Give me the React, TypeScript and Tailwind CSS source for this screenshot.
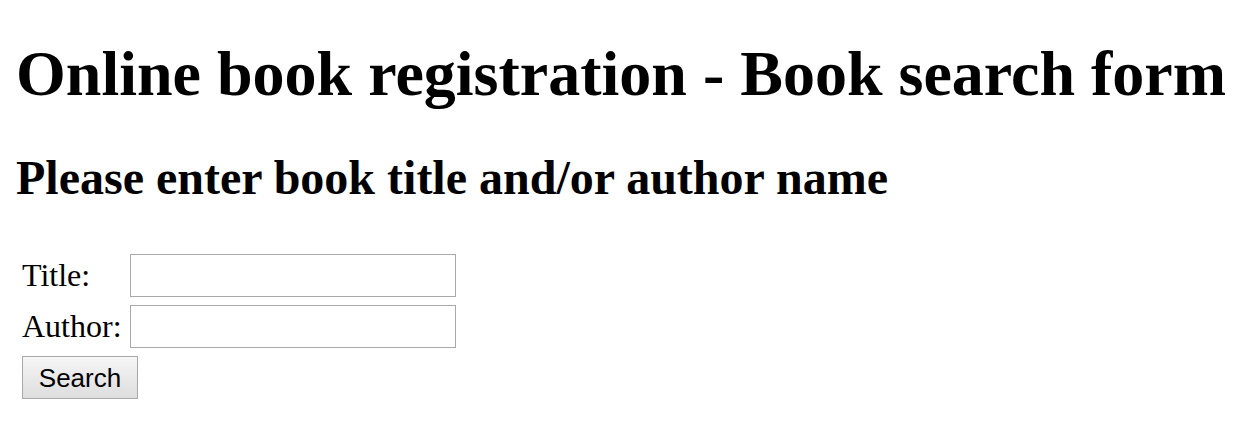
export default function App() {
  return (
    <div className="bg-white text-black min-h-[429px] pl-[16px] pt-[38px]" style={{ fontFamily: '"Liberation Serif", serif' }}>
      <h1 className="text-[64px] font-bold leading-[72px]">Online book registration - Book search form</h1>
      <h2 className="mt-[42px] text-[48px] font-bold leading-[52px]">Please enter book title and/or author name</h2>
      <div className="mt-[50px] ml-[6px] flex flex-col gap-[8px]">
        <div className="flex items-center">
          <span className="w-[108px] text-[32px] leading-[43px]">Title:</span>
          <input className="w-[326px] h-[43px] border border-[#a9a9a9] bg-white" />
        </div>
        <div className="flex items-center">
          <span className="w-[108px] text-[32px] leading-[43px]">Author:</span>
          <input className="w-[326px] h-[43px] border border-[#a9a9a9] bg-white" />
        </div>
        <div>
          <button className="w-[116px] h-[43px] border border-[#a9a9a9] bg-gradient-to-b from-[#f6f6f6] to-[#dddddd] text-[26px] leading-none" style={{ fontFamily: '"Liberation Sans", Arial, sans-serif' }}>Search</button>
        </div>
      </div>
    </div>
  );
}
